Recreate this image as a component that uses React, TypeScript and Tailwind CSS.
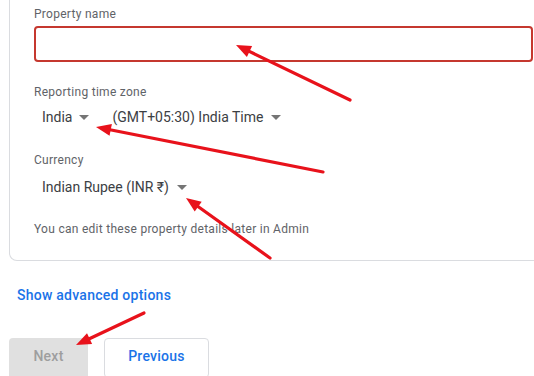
import React from 'react';

type Arrow = { from: [number, number]; to: [number, number] };

const arrows: Arrow[] = [
  { from: [350, 100], to: [236, 45] },
  { from: [323, 172], to: [96, 127] },
  { from: [270, 258], to: [186, 198] },
  { from: [144, 313], to: [76, 345] },
];

const Caret = () => (
  <svg width="10" height="5" viewBox="0 0 10 5" className="shrink-0">
    <polygon points="0,0 10,0 5,5" fill="#757575" />
  </svg>
);

const ArrowShape = ({ from, to }: Arrow) => {
  const [x1, y1] = from;
  const [x2, y2] = to;
  const len = Math.hypot(x2 - x1, y2 - y1);
  const ux = (x2 - x1) / len;
  const uy = (y2 - y1) / len;
  const head = 15;
  const half = 6;
  const bx = x2 - ux * head;
  const by = y2 - uy * head;
  const pts = `${x2},${y2} ${bx - uy * half},${by + ux * half} ${bx + uy * half},${by - ux * half}`;
  return (
    <g>
      <line x1={x1} y1={y1} x2={bx + ux * 2} y2={by + uy * 2} stroke="#e8121b" strokeWidth="3.2" strokeLinecap="round" />
      <polygon points={pts} fill="#e8121b" />
    </g>
  );
};

export default function App() {
  return (
    <div className="relative w-[534px] h-[376px] overflow-hidden bg-white" style={{ fontFamily: 'Roboto, "Noto Sans", sans-serif' }}>
      <div className="ml-[9px] w-[540px] border border-t-0 border-[#dadce0] rounded-b-lg pl-[24px] pt-[6px] pb-[23px]">
        <div className="text-[12px] leading-[16px] tracking-[0.28px] text-[#5f6368]">Property name</div>
        <div className="mt-[4px] w-[499px] h-[36px] border-2 border-[#c5382f] rounded-[4px]" />

        <div className="mt-[22px] text-[12px] leading-[16px] tracking-[0.28px] text-[#5f6368]">Reporting time zone</div>
        <div className="mt-[7px] pl-[8px] flex items-center h-[20px] text-[14px] text-[#3c4043]">
          <span>India</span>
          <span className="ml-[7px]"><Caret /></span>
          <span className="ml-[23px]">(GMT+05:30) India Time</span>
          <span className="ml-[8px]"><Caret /></span>
        </div>

        <div className="mt-[25px] text-[12px] leading-[16px] tracking-[0.28px] text-[#5f6368]">Currency</div>
        <div className="mt-[9px] pl-[8px] flex items-center h-[20px] text-[14px] text-[#3c4043]">
          <span>Indian Rupee (INR ₹)</span>
          <span className="ml-[8px]"><Caret /></span>
        </div>

        <div className="mt-[24px] text-[12px] leading-[16px] tracking-[0.28px] text-[#5f6368]">
          You can edit these property details later in Admin
        </div>
      </div>

      <div className="mt-[24px] ml-[17px] text-[14px] leading-[20px] font-medium tracking-[0.25px] text-[#1a73e8]">
        Show advanced options
      </div>

      <div className="mt-[33px] flex">
        <div className="ml-[9px] w-[79px] h-[40px] rounded-t-[4px] bg-[#e0e0e0] flex items-center justify-center pb-[4px] text-[14px] font-medium tracking-[0.25px] text-[#9e9e9e]">
          Next
        </div>
        <div className="ml-[16px] w-[105px] h-[40px] rounded-[4px] border border-[#dadce0] flex items-center justify-center pb-[4px] text-[14px] font-medium tracking-[0.25px] text-[#1a73e8]">
          Previous
        </div>
      </div>

      <svg className="absolute inset-0 pointer-events-none" width="534" height="376">
        {arrows.map((a, i) => (
          <ArrowShape key={i} {...a} />
        ))}
      </svg>
    </div>
  );
}
